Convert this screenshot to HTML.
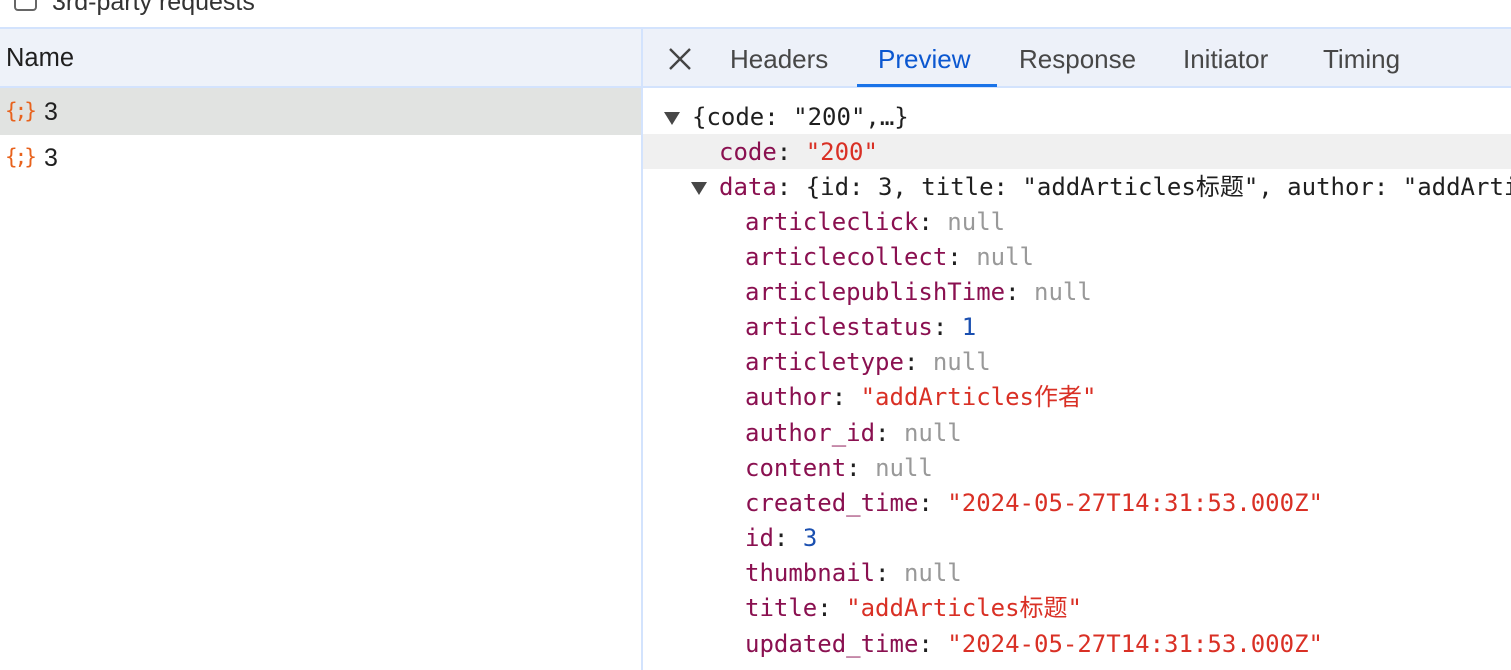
<!DOCTYPE html><html><head><style>
body{margin:0;width:1511px;height:670px;overflow:hidden;background:#fff;font-family:"Liberation Sans",sans-serif;position:relative}
.a{position:absolute;white-space:pre}
.m{position:absolute;left:0;top:0;width:1511px;height:670px;overflow:hidden;font-family:"DejaVu Sans Mono","Liberation Mono",monospace;font-size:24px;color:#1f1f1f}
.m .a{line-height:30px;height:30px}
.k{color:#8a1050}.s{color:#d93025}.n{color:#999}.d{color:#1a4fb0}
.tab{font-size:26px;color:#474747;top:44px}
</style></head><body>
<div class="a" style="left:14px;top:-12px;width:19px;height:19px;border:2px solid #666;border-radius:4px"></div>
<div class="a" style="left:52px;top:-12px;font-size:25px;color:#333">3rd-party requests</div>
<div class="a" style="left:0;top:27px;width:1511px;height:2px;background:#d3e3fd"></div>
<div class="a" style="left:0;top:29px;width:641px;height:57px;background:#eef2f9"></div>
<div class="a" style="left:641px;top:29px;width:870px;height:57px;background:#edf1f9"></div>
<div class="a" style="left:0;top:86px;width:1511px;height:2px;background:#d3e3fd"></div>
<div class="a" style="left:641px;top:29px;width:2px;height:641px;background:#d3e3fd"></div>
<div class="a" style="left:6px;top:44px;font-size:25.5px;color:#1f1f1f">Name</div>
<div class="a" style="left:0;top:88px;width:641px;height:47px;background:#e1e3e1"></div>
<div class="a" style="left:5px;top:99px;font-size:21px;color:#e8621c;font-family:'DejaVu Sans Mono',monospace;letter-spacing:-3px">{;}</div>
<div class="a" style="left:44px;top:98px;font-size:25px;color:#1f1f1f">3</div>
<div class="a" style="left:5px;top:145px;font-size:21px;color:#e8621c;font-family:'DejaVu Sans Mono',monospace;letter-spacing:-3px">{;}</div>
<div class="a" style="left:44px;top:144px;font-size:25px;color:#1f1f1f">3</div>
<svg class="a" style="left:668px;top:47px" width="24" height="24"><path d="M2 2L22 22M22 2L2 22" stroke="#444" stroke-width="2.4"/></svg>
<div class="a tab" style="left:730px">Headers</div>
<div class="a tab" style="left:878px;color:#0b57d0">Preview</div>
<div class="a" style="left:857px;top:84px;width:140px;height:3px;background:#1a73e8"></div>
<div class="a tab" style="left:1019px">Response</div>
<div class="a tab" style="left:1183px">Initiator</div>
<div class="a tab" style="left:1323px">Timing</div>
<div class="a" style="left:643px;top:134px;width:868px;height:35px;background:#f0f0f0"></div>
<svg class="a" style="left:664px;top:112px" width="16" height="13"><path d="M0 0H16L8 13Z" fill="#474747"/></svg>
<svg class="a" style="left:691px;top:182px" width="16" height="13"><path d="M0 0H16L8 13Z" fill="#474747"/></svg>
<div class="m">
<div class="a" style="left:692px;top:102px">{code: "200",…}</div>
<div class="a" style="left:719px;top:137px"><span class="k">code</span>: <span class="s">"200"</span></div>
<div class="a" style="left:719px;top:172px"><span class="k">data</span>: {id: 3, title: "addArticles标题", author: "addArticles作者"</div>
<div class="a" style="left:745px;top:207px"><span class="k">articleclick</span>: <span class="n">null</span></div>
<div class="a" style="left:745px;top:242px"><span class="k">articlecollect</span>: <span class="n">null</span></div>
<div class="a" style="left:745px;top:277px"><span class="k">articlepublishTime</span>: <span class="n">null</span></div>
<div class="a" style="left:745px;top:312px"><span class="k">articlestatus</span>: <span class="d">1</span></div>
<div class="a" style="left:745px;top:347px"><span class="k">articletype</span>: <span class="n">null</span></div>
<div class="a" style="left:745px;top:382px"><span class="k">author</span>: <span class="s">"addArticles作者"</span></div>
<div class="a" style="left:745px;top:418px"><span class="k">author_id</span>: <span class="n">null</span></div>
<div class="a" style="left:745px;top:453px"><span class="k">content</span>: <span class="n">null</span></div>
<div class="a" style="left:745px;top:488px"><span class="k">created_time</span>: <span class="s">"2024-05-27T14:31:53.000Z"</span></div>
<div class="a" style="left:745px;top:523px"><span class="k">id</span>: <span class="d">3</span></div>
<div class="a" style="left:745px;top:558px"><span class="k">thumbnail</span>: <span class="n">null</span></div>
<div class="a" style="left:745px;top:593px"><span class="k">title</span>: <span class="s">"addArticles标题"</span></div>
<div class="a" style="left:745px;top:629px"><span class="k">updated_time</span>: <span class="s">"2024-05-27T14:31:53.000Z"</span></div>
</div>
</body></html>
